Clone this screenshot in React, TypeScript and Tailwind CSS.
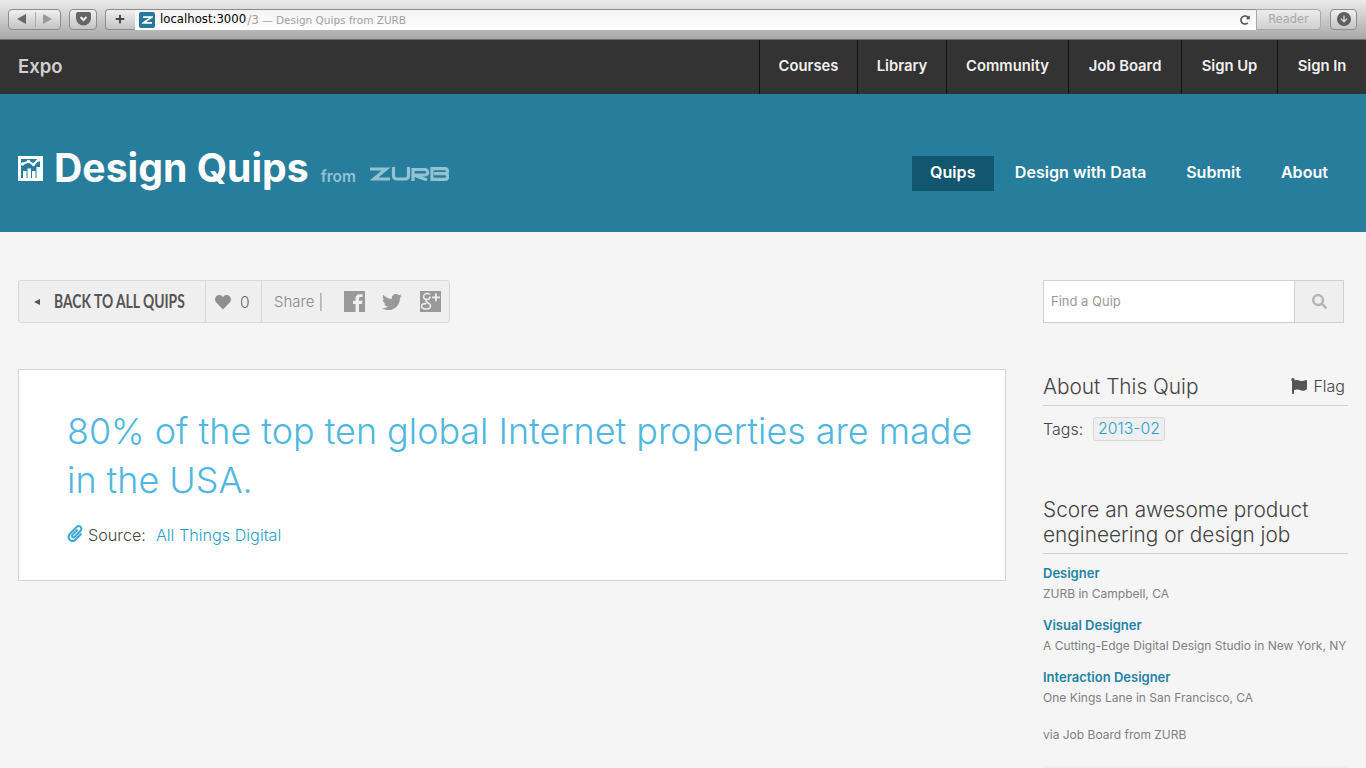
import { FaHeart, FaFlag, FaSearch, FaPaperclip, FaPlus, FaRedoAlt, FaArrowDown, FaTwitter } from "react-icons/fa";

const sans = "font-['Inter','Liberation_Sans',sans-serif]";
const lucida = "font-['DejaVu_Sans',sans-serif]";

function Chrome() {
  return (
    <div className={`h-[40px] bg-gradient-to-b from-[#ececec] to-[#a8a8a8] border-b border-[#6f6f6f] flex items-center pl-[8px] pr-[9px] pb-[1px] ${lucida}`}>
      <div className="w-[53px] h-[21px] rounded-[4px] border border-[#8c8c8c] bg-gradient-to-b from-[#f0f0f0] to-[#c4c4c4] flex items-center shrink-0">
        <div className="w-[26px] flex justify-center"><svg width="11" height="10" viewBox="0 0 11 10"><path d="M1 5l9-5v10z" fill="#666" /></svg></div>
        <div className="w-px h-[15px] bg-[#aaa]" />
        <div className="w-[25px] flex justify-center"><svg width="11" height="10" viewBox="0 0 11 10"><path d="M10 5L1 0v10z" fill="#999" /></svg></div>
      </div>
      <div className="w-[28px] h-[21px] ml-[8px] rounded-[4px] border border-[#8c8c8c] bg-gradient-to-b from-[#f0f0f0] to-[#c4c4c4] flex items-center justify-center shrink-0">
        <svg width="15" height="14" viewBox="0 0 15 14"><path d="M2 0h11a2 2 0 012 2v4a7.500 7.500 0 01-15 0V2a2 2 0 012-2z" fill="#666" /><path d="M4.500 5l3 3 3-3" fill="none" stroke="#eee" strokeWidth="2" /></svg>
      </div>
      <div className="flex h-[21px] ml-[8px] flex-1 min-w-0">
        <div className="w-[30px] rounded-l-[4px] border border-r-0 border-[#8c8c8c] bg-gradient-to-b from-[#f0f0f0] to-[#c4c4c4] flex items-center justify-center pr-[2px] shrink-0">
          <FaPlus className="text-[#444] w-[10px] h-[10px]" />
        </div>
        <div className="flex-1 min-w-0 bg-gradient-to-b from-[#f3f3f3] to-white border-t border-[#8c8c8c] flex items-center pl-[4px] pr-[6px]">
          <div className="w-[16px] h-[16px] rounded-[2px] bg-[#27789a] flex items-center justify-center shrink-0">
            <svg width="11" height="8" viewBox="0 0 11 8"><path d="M1 1.200h8.500L1.500 6.800H10" fill="none" stroke="#fff" strokeWidth="1.800" /></svg>
          </div>
          <span className="ml-[5px] pt-px text-[11.700px] text-black whitespace-nowrap">localhost:3000</span>
          <span className="pt-px text-[10.500px] text-[#a0a0a0] ml-px whitespace-nowrap"><span className="text-[12px]">/3</span> — Design Quips from ZURB</span>
          <FaRedoAlt className="ml-auto text-[#555] w-[10px] h-[10px]" />
        </div>
        <div className="w-[65px] rounded-r-[4px] border border-[#a8a8a8] bg-gradient-to-b from-[#ececec] to-[#d0d0d0] flex items-center justify-center pt-[2px] text-[11.500px] text-[#a9a9a9] shrink-0">Reader</div>
      </div>
      <div className="w-[27px] h-[21px] ml-[9px] rounded-[4px] border border-[#8c8c8c] bg-gradient-to-b from-[#f0f0f0] to-[#c4c4c4] flex items-center justify-center shrink-0">
        <div className="w-[14px] h-[14px] rounded-full bg-[#5e5e5e] flex items-center justify-center"><FaArrowDown className="text-[#ddd] w-[8px] h-[8px]" /></div>
      </div>
    </div>
  );
}

function TopNav() {
  const items = [
    { t: "Courses", w: "w-[98px]" },
    { t: "Library", w: "w-[89px]" },
    { t: "Community", w: "w-[122px]" },
    { t: "Job Board", w: "w-[113px]" },
    { t: "Sign Up", w: "w-[96px]" },
    { t: "Sign In", w: "w-[89px]" },
  ];
  return (
    <div className="h-[54px] bg-[#333333] flex items-center justify-between pl-[18px]">
      <span className="text-[18.500px] font-semibold text-[#d0d0d0] pb-px">Expo</span>
      <div className="flex h-full">
        {items.map(({ t, w }) => (
          <a key={t} className={`${w} flex items-center justify-center border-l border-[#111] pb-[1px] text-[14.800px] font-semibold text-[#f0f0f0]`}>{t}</a>
        ))}
      </div>
    </div>
  );
}

function Header() {
  return (
    <div className="h-[138px] bg-[#277d9c] flex items-start justify-between pl-[18px] pr-[38px] pt-[46px]">
      <div className="flex items-baseline">
        <svg className="self-start mt-[16px] mr-[11px]" width="25" height="25" viewBox="0 0 25 25">
          <path fillRule="evenodd" fill="#fff" d="M0 0h25v25H0zM3 3v19h19V3z" />
          <path fill="#fff" d="M5 15h3.500v8H5zM9.500 12.500H13V23H9.500zM14 15h3.500v8H14zM18.500 11H22v12h-3.500z" />
          <path fill="none" stroke="#fff" strokeWidth="2" d="M4.500 8l6-2.500 5 3 5-5" />
          <circle cx="4.500" cy="8" r="1.700" fill="#fff" />
          <circle cx="10.500" cy="5.500" r="1.700" fill="#fff" />
          <circle cx="15.500" cy="8.500" r="1.700" fill="#fff" />
          <circle cx="20.500" cy="4" r="1.700" fill="#fff" />
        </svg>
        <span className="text-[39.200px] leading-[56px] font-bold text-white">Design Quips</span>
        <span className="ml-[12px] text-[15.500px] font-semibold text-[#93c2d3]">from</span>
        <svg className="ml-[13px] self-start mt-[27px]" width="80" height="14" viewBox="0 0 80 14">
          <g fill="none" stroke="#93c2d3" strokeWidth="3.200">
            <path d="M1 2h16L5 12h16" />
            <path d="M24.500 0v9a3 3 0 003 3h9a3 3 0 003-3V0" />
            <path d="M44 14V2.500h12a2.500 2.500 0 010 5.500H45l13 5" />
            <path d="M63 1.600h13a2.500 2.500 0 010 5H65h11a2.800 2.800 0 010 5.800H63z" />
          </g>
        </svg>
      </div>
      <div className="flex items-center text-[16.100px] font-semibold text-white mt-[16px]">
        <a className="w-[82px] h-[35px] pb-[2px] bg-[#12566f] flex items-center justify-center">Quips</a>
        <a className="ml-[21px] pb-[2px]">Design with Data</a>
        <a className="ml-[40px] pb-[2px]">Submit</a>
        <a className="ml-[40px] pb-[2px]">About</a>
      </div>
    </div>
  );
}

function FacebookBox() {
  return (
    <svg className="ml-[22px] shrink-0" width="21" height="21" viewBox="0 0 21 21">
      <path fill="#999" fillRule="evenodd" d="M0 0h21v21H15v-8h3l.5-3.200H15V7.600c0-1 .4-1.500 1.600-1.500h2V3.200h-2.800C12.900 3.200 11.500 5 11.500 7.300v2.500H9V13h2.500v8H0z" />
    </svg>
  );
}

function GooglePlusBox() {
  return (
    <svg className="ml-[18px] shrink-0" width="21" height="21" viewBox="0 0 21 21">
      <rect width="21" height="21" fill="#999" />
      <path fill="none" stroke="#efefef" strokeWidth="1.500" d="M10 3.500c-.8-.6-1.800-.9-3-.9-2 0-3.400 1.300-3.400 3 0 1.800 1.400 3 3.200 3 1.900 0 3.200-1.300 3.200-3" />
      <path fill="none" stroke="#efefef" strokeWidth="1.500" d="M7 8.500c-2 1-1 2 .5 3 2 1.200 3 2 3 3.400 0 2-2 3.100-4.500 3.100-2.700 0-4.500-1-4.500-2.700 0-1.600 1.800-2.700 5-2.700" />
      <path fill="#efefef" d="M15 2.500h1.800v3H20v1.800h-3.200v3H15v-3h-3V5.500h3z" />
    </svg>
  );
}

function Toolbar() {
  return (
    <div className="w-[432px] h-[43px] bg-[#efefef] border border-[#d8d8d8] rounded-[3px] flex items-stretch">
      <div className="w-[187px] flex items-center pl-[15px] border-r border-[#d8d8d8] shrink-0">
        <svg className="shrink-0" width="6" height="6" viewBox="0 0 6 6"><path d="M0 3l6-3v6z" fill="#555" /></svg>
        <span className="ml-[14px] w-[131px] text-[18px] font-bold text-[#555] whitespace-nowrap origin-left scale-x-[0.77] font-['Lato',sans-serif]">BACK TO ALL QUIPS</span>
      </div>
      <div className="w-[56px] flex items-center pl-[8px] border-r border-[#d8d8d8] shrink-0">
        <FaHeart className="w-[18px] h-[16px] text-[#8f8f8f] shrink-0" />
        <span className="ml-[8px] text-[15.500px] font-light text-[#666] mt-[3px]">0</span>
      </div>
      <div className="flex items-center pl-[12px] flex-1">
        <span className="w-[48px] mt-[1px] text-[15px] font-light text-[#888] whitespace-nowrap">Share |</span>
        <FacebookBox />
        <FaTwitter className="ml-[17px] w-[20px] h-[20px] text-[#999] shrink-0" />
        <GooglePlusBox />
      </div>
    </div>
  );
}

function Search() {
  return (
    <div className="w-[301px] h-[43px] flex border border-[#d0d0d0]">
      <div className="flex-1 bg-white flex items-center pl-[7px] text-[13px] text-[#999]">Find a Quip</div>
      <div className="w-[49px] bg-[#efefef] border-l border-[#d0d0d0] flex items-center justify-center">
        <FaSearch className="w-[15px] h-[15px] text-[#b5b5b5]" />
      </div>
    </div>
  );
}

function Job({ title, sub }: { title: string; sub: string }) {
  return (
    <div className="h-[52px]">
      <div className="text-[13px] leading-[18px] font-semibold text-[#1f83a6]">{title}</div>
      <div className="mt-[2px] text-[12px] leading-[20px] text-[#808080] whitespace-nowrap">{sub}</div>
    </div>
  );
}

function Sidebar() {
  return (
    <aside className="w-[305px] ml-[37px] shrink-0">
      <Search />
      <div className="mt-[46px] flex items-end justify-between h-[37px] border-b border-[#d0d0d0] pb-[5px] pr-[3px]">
        <h3 className="text-[20.800px] font-light leading-[26px] text-[#444]">About This Quip</h3>
        <span className="flex items-center text-[16px] font-light text-[#444] leading-[26px] mb-[1px]"><FaFlag className="w-[16px] h-[16px] mr-[6px] text-[#555]" />Flag</span>
      </div>
      <div className="mt-[11px] flex items-center h-[24px]">
        <span className="w-[38px] pb-px text-[16px] font-light text-[#444]">Tags:</span>
        <span className="ml-[12px] h-[24px] w-[72px] bg-[#efefef] border border-[#d8d8d8] rounded-[3px] flex items-center justify-center text-[15.800px] font-light text-[#2a9fcb]">2013-02</span>
      </div>
      <h3 className="mt-[56px] text-[20.800px] font-light leading-[25px] text-[#444] pb-[6px] border-b border-[#d0d0d0]">Score an awesome product engineering or design job</h3>
      <div className="mt-[10px]">
        <Job title="Designer" sub="ZURB in Campbell, CA" />
        <Job title="Visual Designer" sub="A Cutting-Edge Digital Design Studio in New York, NY" />
        <Job title="Interaction Designer" sub="One Kings Lane in San Francisco, CA" />
      </div>
      <div className="mt-[-17px] pt-[22px] text-[12px] leading-[20px] text-[#808080]">via Job Board from ZURB</div>
      <div className="mt-[21px] h-[4px] bg-[#efefef]" />
    </aside>
  );
}

function Card() {
  return (
    <div className="mt-[46px] w-[988px] h-[212px] bg-white border border-[#d4d4d4] pl-[48px] pt-[37px]">
      <h1 className="text-[35.900px] font-light leading-[49px] text-[#4fb7e0] w-[920px]">80% of the top ten global Internet properties are made in the USA.</h1>
      <div className="mt-[17px] flex items-center text-[16.200px] font-light leading-[26px] text-[#444]">
        <FaPaperclip className="w-[16px] h-[17px] text-[#3ea9d4] mr-[5px] mt-[-4px]" />
        <span>Source:</span>
        <a className="ml-[10px] text-[#2a9fcb]">All Things Digital</a>
      </div>
    </div>
  );
}

export default function App() {
  return (
    <div className={`h-screen overflow-hidden bg-[#f5f5f5] ${sans}`}>
      <Chrome />
      <TopNav />
      <Header />
      <main className="flex pl-[18px] pt-[48px]">
        <div className="w-[988px] shrink-0">
          <Toolbar />
          <Card />
        </div>
        <Sidebar />
      </main>
    </div>
  );
}
